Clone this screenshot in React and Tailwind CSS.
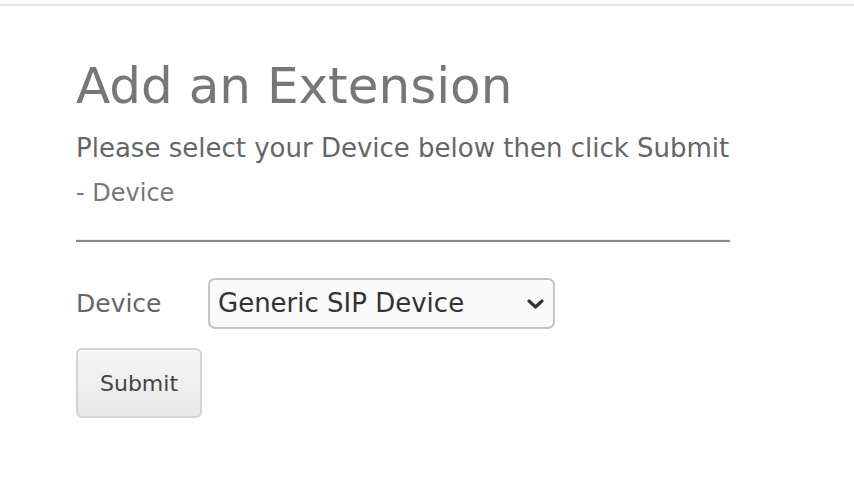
export default function App() {
  return (
    <div className="min-h-[486px] bg-white" style={{ fontFamily: '"DejaVu Sans", Verdana, sans-serif' }}>
      <div className="h-[4px]" />
      <div className="h-[2px] bg-[#e6e6e6]" />
      <div className="pl-[76px] pt-[50px] w-[730px]">
        <h1 className="text-[50px] leading-[60px] text-[#777777]">Add an Extension</h1>
        <p className="mt-[15px] text-[26px] leading-[34px] text-[#666666]">Please select your Device below then click Submit</p>
        <p className="mt-[13px] text-[24px] leading-[30px] text-[#777777]">- Device</p>
        <div className="mt-[31px] h-[3px] border-t border-[#f0f0f0] bg-[#888888]" />
        <div className="mt-[36px] flex items-center">
          <span className="w-[132px] text-[25px] text-[#666666]">Device</span>
          <div className="relative w-[347px] h-[51px] rounded-[7px] border-2 border-[#c4c4c4] bg-[#fafafa] flex items-center">
            <span className="pl-[8px] text-[26px] text-[#333333]">Generic SIP Device</span>
            <svg className="absolute right-[9px] top-[18px]" width="17" height="12" viewBox="0 0 17 12">
              <path d="M2 3 L8.5 9 L15 3" fill="none" stroke="#333" strokeWidth="3.2" strokeLinecap="round" strokeLinejoin="round" />
            </svg>
          </div>
        </div>
        <button className="mt-[19px] w-[126px] h-[70px] rounded-[6px] border-2 border-[#d4d4d4] bg-gradient-to-b from-[#f6f6f6] to-[#e8e8e8] text-[22px] text-[#444444]">
          Submit
        </button>
      </div>
    </div>
  );
}
